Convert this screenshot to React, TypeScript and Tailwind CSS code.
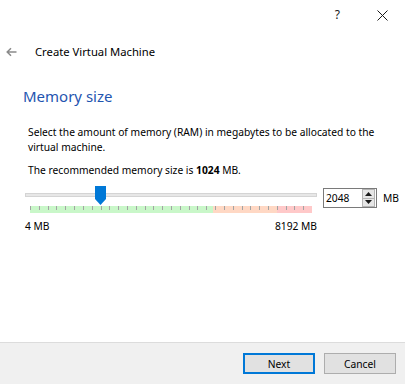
import React from "react";

function Thumb() {
  return (
    <svg width="11" height="19" viewBox="0 0 11 19" className="block">
      <polygon points="0,0 11,0 11,13 5.5,19 0,13" fill="#0078d7" />
    </svg>
  );
}

function Scale() {
  const ticks = Array.from({ length: 32 }, (_, i) => i);
  return (
    <svg width="282" height="7" viewBox="0 0 282 7" className="block">
      <rect x="0" y="0" width="183" height="7" fill="#c9f7c9" />
      <rect x="183" y="0" width="64" height="7" fill="#ffd8c4" />
      <rect x="247" y="0" width="35" height="7" fill="#ffc9c9" />
      {ticks.map((i) => (
        <rect key={i} x={Math.round(i * 8.8125)} y="0" width="1" height="4" fill="#a3a3a3" />
      ))}
    </svg>
  );
}

function SpinButtons() {
  return (
    <div className="flex flex-col w-[13px] h-[18px] border border-[#b4b4b4] bg-[#e6e6e6]">
      <div className="flex-1 flex items-center justify-center border-b border-[#b4b4b4]">
        <svg width="7" height="4" viewBox="0 0 7 4" className="block">
          <polygon points="0,4 7,4 3.5,0" fill="#1a1a1a" />
        </svg>
      </div>
      <div className="flex-1 flex items-center justify-center">
        <svg width="7" height="4" viewBox="0 0 7 4" className="block">
          <polygon points="0,0 7,0 3.5,4" fill="#1a1a1a" />
        </svg>
      </div>
    </div>
  );
}

export default function App() {
  return (
    <div className="w-[405px] h-[384px] bg-white flex flex-col text-[10.25px] text-black font-['Noto_Sans',sans-serif] overflow-hidden">
      {/* title bar */}
      <div className="h-[30px] flex items-center justify-end pr-[17px]">
        <span className="text-[12px] leading-[14px] text-[#1a1a1a] mr-[37px]">?</span>
        <svg width="11" height="11" viewBox="0 0 11 11" className="block">
          <path d="M0.5 0.5 L10.5 10.5 M10.5 0.5 L0.5 10.5" stroke="#1a1a1a" strokeWidth="1" />
        </svg>
      </div>

      {/* back row */}
      <div className="mt-[13px] h-[18px] flex items-center pl-[6px]">
        <svg width="11" height="10" viewBox="0 0 11 10" className="block">
          <path d="M10.5 5 H1.2 M5 1.2 L1.2 5 L5 8.8" stroke="#8a8a8a" strokeWidth="1.5" fill="none" />
        </svg>
        <span className="ml-[18px] text-[11.25px] leading-[18px]">Create Virtual Machine</span>
      </div>

      {/* heading */}
      <div className="mt-[25px] pl-[23px] text-[15px] leading-[20px] text-[#1f55b0]">Memory size</div>

      {/* description */}
      <div className="mt-[19px] pl-[28px] leading-[15px] whitespace-nowrap">
        Select the amount of memory (RAM) in megabytes to be allocated to the
        <br />
        virtual machine.
      </div>

      <div className="mt-[8px] pl-[28px] leading-[15px]">
        The recommended memory size is <b>1024</b> MB.
      </div>

      {/* slider row */}
      <div className="mt-[8px] flex items-start pl-[25px]">
        <div className="w-[292px] flex flex-col">
          <div className="relative h-[20px]">
            <div className="absolute left-0 right-0 top-[7px] h-[4px] bg-[#e7e7e7] border border-[#d4d4d4]" />
            <div className="absolute left-[70px] top-0">
              <Thumb />
            </div>
          </div>
          <div className="pl-[5px]">
            <Scale />
          </div>
          <div className="mt-[6px] flex justify-between leading-[14px]">
            <span>4 MB</span>
            <span>8192 MB</span>
          </div>
        </div>
        <div className="ml-[6px] mt-[2px] w-[54px] h-[20px] border border-[#7a7a7a] bg-white flex items-center justify-between pl-[2px] pr-[1px]">
          <span className="leading-[14px]">2048</span>
          <SpinButtons />
        </div>
        <div className="ml-[6px] mt-[5px] leading-[14px]">MB</div>
      </div>

      {/* footer */}
      <div className="mt-auto h-[42px] border-t border-[#dcdcdc] bg-[#f0f0f0] flex justify-end items-start pt-[10px] pr-[9px] gap-[9px]">
        <button className="w-[72px] h-[21px] border-2 border-[#0078d7] bg-[#e1e1e1] leading-[14px]">Next</button>
        <button className="w-[72px] h-[21px] border border-[#adadad] bg-[#e1e1e1] leading-[14px]">Cancel</button>
      </div>
    </div>
  );
}
